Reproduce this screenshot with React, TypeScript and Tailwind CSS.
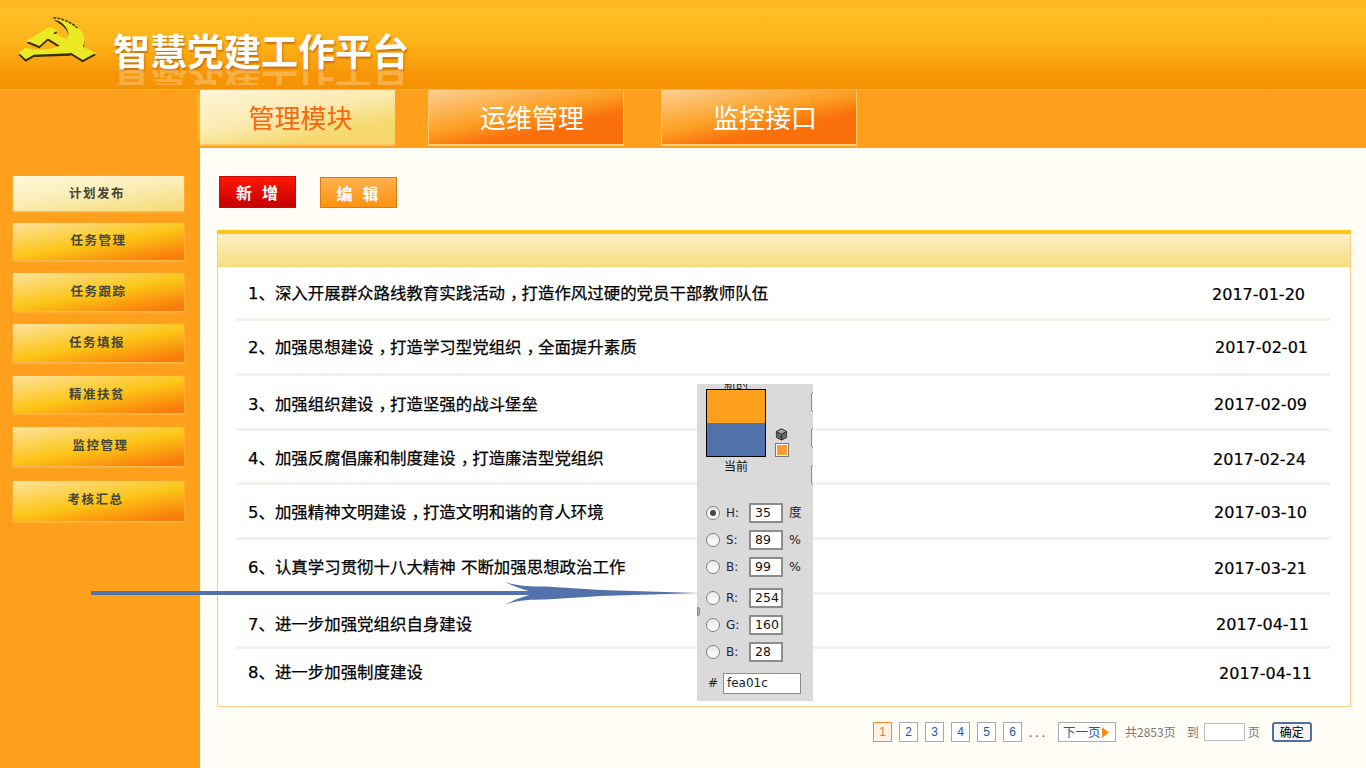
import React from "react";

const cjk = "font-['DejaVu_Sans','Noto_Sans_CJK_SC',sans-serif]";
const hei = "font-['Noto_Sans_CJK_SC',sans-serif]";

const btnGrad = "bg-[linear-gradient(170deg,#fde3a0_0%,#fcc516_52%,#fa7c0b_92%)]";

const side = [
  { t: "计划发布", c: "mt-[28px] h-[35px] pr-[3px] bg-[linear-gradient(172deg,#fff8dc_0%,#fbeeb8_45%,#f6da75_100%)]" },
  { t: "任务管理", c: "mt-[12px] h-[37px] pb-[2px] " + btnGrad },
  { t: "任务跟踪", c: "mt-[13px] h-[38px] pb-[2px] " + btnGrad },
  { t: "任务填报", c: "mt-[13px] h-[38px] pr-[3px] pb-[2px] " + btnGrad },
  { t: "精准扶贫", c: "mt-[14px] h-[37px] pr-[3px] " + btnGrad },
  { t: "监控管理", c: "mt-[14px] h-[39px] pl-[4px] pb-[2px] " + btnGrad },
  { t: "考核汇总", c: "mt-[15px] h-[40px] pr-[6px] pb-[4px] " + btnGrad },
];

const rows = [
  { n: "1、", t: "深入开展群众路线教育实践活动，打造作风过硬的党员干部教师队伍", d: "2017-01-20", h: "h-[54px] border-b-[3px]", r: "mr-[25px]" },
  { n: "2、", t: "加强思想建设，打造学习型党组织，全面提升素质", d: "2017-02-01", h: "h-[55px] pb-[2px] border-b-[3px]", r: "mr-[22px]" },
  { n: "3、", t: "加强组织建设，打造坚强的战斗堡垒", d: "2017-02-09", h: "h-[55px] pt-[2px] border-b-[3px]", r: "mr-[23px]" },
  { n: "4、", t: "加强反腐倡廉和制度建设，打造廉洁型党组织", d: "2017-02-24", h: "h-[54px] pt-[2px] border-b-[3px]", r: "mr-[24px]" },
  { n: "5、", t: "加强精神文明建设，打造文明和谐的育人环境", d: "2017-03-10", h: "h-[55px] border-b-[3px]", r: "mr-[23px]" },
  { n: "6、", t: "认真学习贯彻十八大精神 不断加强思想政治工作", d: "2017-03-21", h: "h-[55px] pt-[1px] border-b-[3px]", r: "mr-[23px]" },
  { n: "7、", t: "进一步加强党组织自身建设", d: "2017-04-11", h: "h-[54px] pt-[5px] border-b-[3px]", r: "mr-[21px]" },
  { n: "8、", t: "进一步加强制度建设", d: "2017-04-11", h: "h-[57px] pb-[12px]", r: "mr-[18px]" },
];

const sickle = "M130 23C195 30 240 72 218 112L180 130L72 134L47 148L26 128L46 113C90 122 145 120 168 92C188 66 165 40 130 23Z";
const hHead = "M50 92L118 50L142 60L88 108Z";
const hHandle = "M106 80L126 68L258 128L218 150Z";

function Logo() {
  return (
    <svg viewBox="0 0 300 210" className="w-[100px] h-[70px] shrink-0 mt-[10px]">
      <g fill="#3a2c08" transform="translate(0 7)">
        <path d={sickle} />
        <path d={hHead} />
        <path d={hHandle} />
      </g>
      <g fill="#e9e924">
        <path d={sickle} />
        <path d={hHead} />
        <path d={hHandle} />
      </g>
      <path d="M130 23C160 26 185 38 202 54" fill="none" stroke="#5a4608" strokeWidth="5" strokeDasharray="9 3" />
    </svg>
  );
}

function RowText({ s }: { s: string }) {
  const parts = s.split("，");
  return (
    <>
      {parts.map((p, i) => (
        <React.Fragment key={i}>
          {i > 0 && <span className="relative left-[5px]">，</span>}
          {p}
        </React.Fragment>
      ))}
    </>
  );
}

function PageBox({ t, on }: { t: string; on?: boolean }) {
  return (
    <span
      className={
        on
          ? "w-[19px] h-[20px] flex items-center justify-center border border-[#f98a32] bg-[#fff1e4] text-[#f4772a] text-[12px] font-['Liberation_Sans',sans-serif]"
          : "w-[19px] h-[20px] flex items-center justify-center border border-[#aaaaaa] bg-white text-[#1c57ab] text-[12px] font-['Liberation_Sans',sans-serif]"
      }
    >
      {t}
    </span>
  );
}

function ColorRow({ l, v, u, c }: { l: string; v: string; u?: string; c: string }) {
  return (
    <div className={"flex items-center h-[20px] " + c}>
      <span className="w-[14px] h-[14px] rounded-full border border-[#808080] bg-[linear-gradient(180deg,#e8e8e8,#ffffff)] flex items-center justify-center shrink-0">
        {l === "H:" && <span className="w-[6px] h-[6px] rounded-full bg-[#444444]" />}
      </span>
      <span className="w-[23px] ml-[6px] text-[12px] text-[#222244] font-['DejaVu_Sans',sans-serif]">{l}</span>
      <span className="w-[34px] h-[20px] border-2 border-[#8c8c8c] bg-white pl-[4px] text-[12.5px] leading-[16px] text-[#111111] font-['DejaVu_Sans',sans-serif]">{v}</span>
      {u && <span className="ml-[6px] text-[12.5px] text-[#222222] font-['DejaVu_Sans','Noto_Sans_CJK_SC',sans-serif]">{u}</span>}
    </div>
  );
}

export default function App() {
  return (
    <div className="relative w-[1366px] h-[768px] overflow-hidden bg-[#fea01c] flex flex-col">
      <header className="h-[90px] shrink-0 flex items-center pl-[10px] pb-[10px] bg-[linear-gradient(180deg,#fdb822_0%,#febf25_12%,#fdb51b_45%,#f79506_85%,#f59305_100%)] border-b border-[#fbae4e]">
        <Logo />
        <div className="relative ml-[3px] mt-[20px]">
          <div className={"text-[37px] leading-[40px] font-bold text-white whitespace-nowrap [text-shadow:1px_2px_2px_#c8700a] " + hei}>智慧党建工作平台</div>
          <div className="absolute left-0 top-[38px] h-[17px] overflow-hidden opacity-25">
            <div className={"text-[37px] leading-[40px] font-bold text-white whitespace-nowrap -scale-y-100 " + hei}>智慧党建工作平台</div>
          </div>
        </div>
      </header>

      <nav className="h-[58px] shrink-0 flex pl-[200px] bg-[#fea01c]">
        <div className={"relative w-[195px] h-[56px] pl-[6px] pb-[2px] flex items-center justify-center text-[26px] text-[#f4690c] bg-[linear-gradient(168deg,#fff6da_0%,#fbeab0_45%,#f6d96f_75%,#f6d76a_100%)] border-b-2 border-[#ffc15c] " + hei}>
          <span className="absolute left-[-3px] top-[5px] bottom-[2px] w-[3px] bg-[#fdb91c]" />
          管理模块
        </div>
        <div className={"ml-[33px] w-[196px] h-[56px] pl-[12px] pb-[2px] flex items-center justify-center text-[26px] text-white bg-[linear-gradient(168deg,#fdd093_0%,#fca024_45%,#f9700a_68%,#f96f0a_100%)] border-l border-r border-[#ffc870] border-b-2 border-b-[#ffd27a] " + hei}>运维管理</div>
        <div className={"ml-[37px] w-[196px] h-[56px] pl-[12px] pb-[2px] flex items-center justify-center text-[26px] text-white bg-[linear-gradient(168deg,#fdd093_0%,#fca024_45%,#f9700a_68%,#f96f0a_100%)] border-l border-r border-[#ffc870] border-b-2 border-b-[#ffd27a] " + hei}>监控接口</div>
      </nav>

      <div className="flex flex-1 min-h-0">
        <aside className="w-[200px] shrink-0 pl-[13px] pr-[16px] bg-[#fea01c]">
          {side.map((s) => (
            <div key={s.t} className={"flex items-center justify-center text-[12.5px] font-bold tracking-[1.5px] text-[#46463a] shadow-[0_1px_2px_#fdc668] " + hei + " " + s.c}>
              {s.t}
            </div>
          ))}
        </aside>

        <main className="flex-1 bg-[#fffdf6] pl-[17px] pr-[15px]">
          <div className="flex items-start pl-[2px] pt-[28px]">
            <button className={"w-[77px] h-[32px] flex items-center justify-center text-[16px] font-bold tracking-[10px] pl-[9px] text-white border border-[#c80a08] bg-[linear-gradient(180deg,#ff1800,#c40000)] " + hei}>新增</button>
            <button className={"ml-[24px] mt-[1px] w-[77px] h-[31px] flex items-center justify-center text-[16px] font-bold tracking-[10px] pl-[8px] text-white border border-[#d97c12] bg-[linear-gradient(180deg,#feb14e,#fe9210)] " + hei}>编辑</button>
          </div>

          <section className="mt-[22px] w-[1134px] h-[477px] border-x border-b border-[#fccb8c] bg-white border-t-4 border-t-[#fdc61a]">
            <div className="h-[33px] border-b border-[#f5d679] bg-[linear-gradient(180deg,#fdf0c6,#f6de82)]" />
            <div className="pl-[18px] pr-[20px]">
              {rows.map((r) => (
                <div key={r.n} className={"flex items-center justify-between pl-[12px] border-[#f5f1ea] text-black " + cjk + " " + r.h}>
                  <span className="pt-[4px] text-[16.45px] whitespace-nowrap [-webkit-text-stroke:0.25px_#000000]">{r.n}<RowText s={r.t} /></span>
                  <span className={"pt-[4px] text-[16px] [-webkit-text-stroke:0.2px_#000000] font-['DejaVu_Sans',sans-serif] " + r.r}>{r.d}</span>
                </div>
              ))}
            </div>
          </section>

          <div className={"flex items-center mt-[14px] pl-[656px] h-[22px] text-[12px] text-[#777777] whitespace-nowrap " + hei}>
            <PageBox t="1" on />
            <div className="ml-[7px] flex gap-[7px]">
              {["2", "3", "4", "5", "6"].map((n) => <PageBox key={n} t={n} />)}
            </div>
            <span className="ml-[7px] w-[29px] tracking-[3px] text-[#555555]">...</span>
            <span className="w-[58px] h-[20px] flex items-center pl-[4px] border border-[#aaaaaa] bg-white text-[#1c57ab] text-[12.5px]">
              下一页
              <svg viewBox="0 0 7 11" className="w-[7px] h-[11px] ml-[1px]"><path d="M0 0L7 5.5L0 11Z" fill="#f98b12" /></svg>
            </span>
            <span className="ml-[9px]">共2853页</span>
            <span className="ml-[11px]">到</span>
            <span className="ml-[5px] w-[41px] h-[18px] border border-[#bbbbbb] bg-white" />
            <span className="ml-[3px]">页</span>
            <span className="ml-[12px] w-[40px] h-[20px] flex items-center justify-center rounded-[3px] border-2 border-[#4f6f9f] bg-[#f6f6f6] text-black">确定</span>
          </div>
        </main>
      </div>

      {/* arrow overlay */}
      <svg viewBox="0 0 610 30" className="absolute left-[91px] top-[578px] w-[610px] h-[30px]">
        <rect x="0" y="13" width="450" height="4" fill="#5272ac" />
        <path d="M414 4C425 8 440 8.5 455 8.5L510 12L606 15L510 18L455 21.5C440 21.5 425 22 414 27C424 21 436 17 447 15C436 13 424 9 414 4Z" fill="#5272ac" />
      </svg>

      {/* colour picker overlay */}
      <div className="absolute left-[697px] top-[384px] w-[116px] h-[317px] bg-[#dadada] overflow-hidden pl-[9px] pt-[5px]">
        <span className={"absolute left-[27px] top-[-9px] text-[12px] text-[#222222] " + hei}>新的</span>
        <span className="absolute right-[-6px] top-[8px] w-[8px] h-[20px] border border-[#8c8c8c] rounded-[2px] bg-[#f2f2f2]" />
        <span className="absolute right-[-6px] top-[44px] w-[8px] h-[20px] border border-[#8c8c8c] rounded-[2px] bg-[#f2f2f2]" />
        <span className="absolute right-[-6px] top-[81px] w-[8px] h-[20px] border border-[#8c8c8c] rounded-[2px] bg-[#f2f2f2]" />
        <span className="absolute left-0 top-[223px] w-[3px] h-[9px] rounded-r-[2px] border border-[#888888] bg-[#bbbbbb]" />
        <div className="flex items-end">
          <div className="w-[60px] h-[68px] border border-black flex flex-col">
            <div className="flex-1 bg-[#fea01c]" />
            <div className="flex-1 bg-[#5272ac]" />
          </div>
          <div className="ml-[9px] flex flex-col items-start">
            <svg viewBox="0 0 14 14" className="w-[13px] h-[13px] ml-[0px] mb-[2px]">
              <path d="M7 1L12.5 3.8V10.2L7 13L1.5 10.2V3.8Z" fill="#666666" stroke="#333333" />
              <path d="M1.5 3.8L7 6.6L12.5 3.8M7 6.6V13" fill="none" stroke="#222222" />
              <path d="M7 1L12.5 3.8L7 6.6L1.5 3.8Z" fill="#a8a8a8" stroke="#333333" />
            </svg>
            <div className="w-[14px] h-[14px] border border-[#777777] bg-[#fe9a2e] outline-1 outline-white -outline-offset-2" />
          </div>
        </div>
        <div className={"w-[60px] mt-[1px] text-center text-[12px] leading-[16px] text-[#111111] " + hei}>当前</div>
        <ColorRow l="H:" v="35" u="度" c="mt-[29px]" />
        <ColorRow l="S:" v="89" u="%" c="mt-[7px]" />
        <ColorRow l="B:" v="99" u="%" c="mt-[7px]" />
        <ColorRow l="R:" v="254" c="mt-[11px]" />
        <ColorRow l="G:" v="160" c="mt-[7px]" />
        <ColorRow l="B:" v="28" c="mt-[7px]" />
        <div className="flex items-center h-[22px] mt-[10px] font-['DejaVu_Sans',sans-serif] text-[12px] text-[#222222]">
          <span className="w-[17px] pl-[2px]">#</span>
          <span className="w-[78px] h-[21px] border border-[#8c8c8c] bg-white pl-[3px] leading-[19px]">fea01c</span>
        </div>
      </div>
    </div>
  );
}
